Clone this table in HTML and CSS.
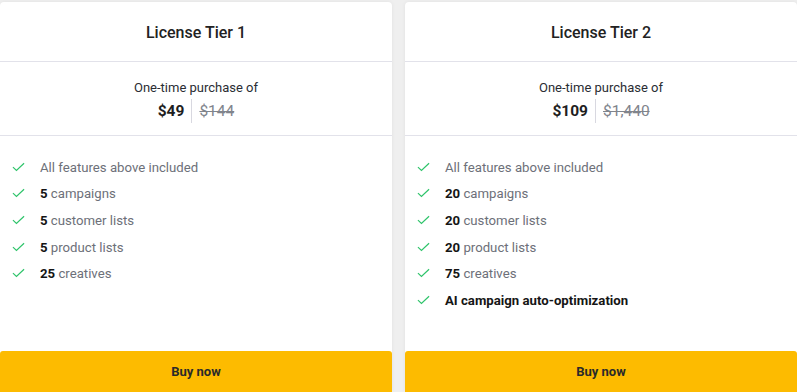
FILE: index.html
```html
<!DOCTYPE html>
<html>
<head>
<meta charset="utf-8">
<link rel="stylesheet" href="styles.css">
</head>
<body>
<div class="tiers">
  <div class="card">
    <div class="card-head">License Tier 1</div>
    <div class="price-box">
      <div class="price-label">One-time purchase of</div>
      <div class="price-row"><span class="price-now">$49</span><span class="price-old">$144</span></div>
    </div>
    <ul class="features">
      <li><svg class="check" viewBox="0 0 14 10"><path d="M1 5.2l3.8 3.6L13 1"/></svg><span>All features above included</span></li>
      <li><svg class="check" viewBox="0 0 14 10"><path d="M1 5.2l3.8 3.6L13 1"/></svg><span><b>5</b> campaigns</span></li>
      <li><svg class="check" viewBox="0 0 14 10"><path d="M1 5.2l3.8 3.6L13 1"/></svg><span><b>5</b> customer lists</span></li>
      <li><svg class="check" viewBox="0 0 14 10"><path d="M1 5.2l3.8 3.6L13 1"/></svg><span><b>5</b> product lists</span></li>
      <li><svg class="check" viewBox="0 0 14 10"><path d="M1 5.2l3.8 3.6L13 1"/></svg><span><b>25</b> creatives</span></li>
    </ul>
    <button class="buy">Buy now</button>
  </div>
  <div class="card">
    <div class="card-head">License Tier 2</div>
    <div class="price-box">
      <div class="price-label">One-time purchase of</div>
      <div class="price-row"><span class="price-now">$109</span><span class="price-old">$1,440</span></div>
    </div>
    <ul class="features">
      <li><svg class="check" viewBox="0 0 14 10"><path d="M1 5.2l3.8 3.6L13 1"/></svg><span>All features above included</span></li>
      <li><svg class="check" viewBox="0 0 14 10"><path d="M1 5.2l3.8 3.6L13 1"/></svg><span><b>20</b> campaigns</span></li>
      <li><svg class="check" viewBox="0 0 14 10"><path d="M1 5.2l3.8 3.6L13 1"/></svg><span><b>20</b> customer lists</span></li>
      <li><svg class="check" viewBox="0 0 14 10"><path d="M1 5.2l3.8 3.6L13 1"/></svg><span><b>20</b> product lists</span></li>
      <li><svg class="check" viewBox="0 0 14 10"><path d="M1 5.2l3.8 3.6L13 1"/></svg><span><b>75</b> creatives</span></li>
      <li><svg class="check" viewBox="0 0 14 10"><path d="M1 5.2l3.8 3.6L13 1"/></svg><span class="strong">AI campaign auto-optimization</span></li>
    </ul>
    <button class="buy">Buy now</button>
  </div>
</div>
</body>
</html>
```
FILE: styles.css
```css
* { box-sizing: border-box; }
html, body { margin: 0; padding: 0; }
body {
  background: #efefef;
  font-family: Roboto, "Liberation Sans", sans-serif;
  width: 797px;
  height: 392px;
  overflow: hidden;
}
.tiers {
  display: flex;
  gap: 13px;
  padding-top: 2px;
  height: 392px;
}
.card {
  width: 392px;
  flex: 0 0 392px;
  background: #fff;
  border-radius: 4px 4px 0 0;
  box-shadow: 0 0 4px rgba(0,0,0,0.06);
  display: flex;
  flex-direction: column;
  height: 390px;
}
.card-head {
  height: 60px;
  display: flex;
  align-items: center;
  justify-content: center;
  font-size: 16px;
  font-weight: 500;
  color: #222;
  border-bottom: 1px solid #e2e2ea;
  padding-top: 2px;
}
.price-box {
  height: 74px;
  border-bottom: 1px solid #e2e2ea;
  display: flex;
  flex-direction: column;
  align-items: center;
  padding-top: 17px;
}
.price-label {
  font-size: 13px;
  color: #2a2d33;
  line-height: 18px;
}
.price-row {
  display: flex;
  align-items: center;
  margin-top: 2px;
  height: 24px;
}
.price-now {
  font-size: 15.5px;
  font-weight: 700;
  color: #1e1e1e;
  padding-right: 7px;
  border-right: 1px solid #d8d8e0;
  line-height: 24px;
}
.price-old {
  font-size: 15.5px;
  color: #80848c;
  text-decoration: line-through;
  padding-left: 7px;
  line-height: 24px;
}
.features {
  list-style: none;
  margin: 0;
  padding: 18px 0 0 12px;
}
.features li {
  display: flex;
  align-items: center;
  height: 26.6px;
  font-size: 13.2px;
  color: #6d7079;
}
.check {
  width: 13px;
  height: 10px;
  margin-right: 15px;
  margin-top: -1px;
  fill: none;
  stroke: #2fc46b;
  stroke-width: 1.3;
}
.features b, .features .strong {
  color: #151515;
  font-weight: 700;
}
.buy {
  margin-top: auto;
  height: 41px;
  width: 100%;
  border: none;
  border-radius: 3px 3px 0 0;
  background: #fdbb00;
  font-family: Roboto, "Liberation Sans", sans-serif;
  font-size: 13px;
  font-weight: 700;
  color: #2a2a2a;
}
```
